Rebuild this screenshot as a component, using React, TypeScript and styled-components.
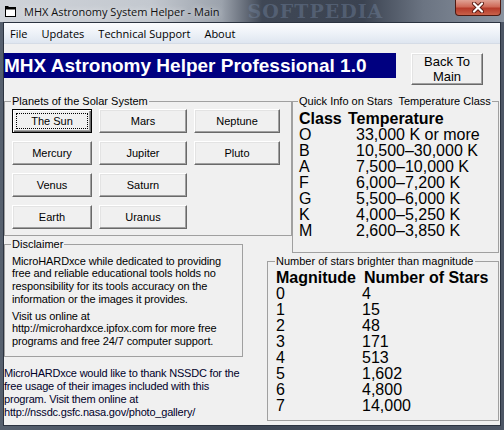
import React from 'react';
import styled, { createGlobalStyle } from 'styled-components';

const GlobalStyle = createGlobalStyle`
  html, body {
    margin: 0;
    padding: 0;
  }
  body {
    width: 504px;
    height: 430px;
    overflow: hidden;
    background: #3f4856;
    font-family: 'Liberation Sans', Arial, sans-serif;
  }
`;

const planets = [
  ['The Sun', 'Mars', 'Neptune'],
  ['Mercury', 'Jupiter', 'Pluto'],
  ['Venus', 'Saturn', ''],
  ['Earth', 'Uranus', ''],
];

const classes = [
  ['O', '33,000 K or more'],
  ['B', '10,500–30,000 K'],
  ['A', '7,500–10,000 K'],
  ['F', '6,000–7,200 K'],
  ['G', '5,500–6,000 K'],
  ['K', '4,000–5,250 K'],
  ['M', '2,600–3,850 K'],
];

const magnitudes = [
  ['0', '4'],
  ['1', '15'],
  ['2', '48'],
  ['3', '171'],
  ['4', '513'],
  ['5', '1,602'],
  ['6', '4,800'],
  ['7', '14,000'],
];

const App = () => {
  return (
    <>
      <GlobalStyle />
      <Window>
        <TitleBar>
          <AppIcon width="11" height="11" viewBox="0 0 11 11">
            <rect x="0.5" y="1.5" width="10" height="9" fill="#fff" stroke="#000" />
            <rect x="0.5" y="1.5" width="10" height="2" fill="#000" />
            <path d="M0 0 L4 0 L0 4 Z" fill="#000" />
          </AppIcon>
          <Title>MHX Astronomy System Helper - Main</Title>
          <Watermark>SOFTPEDIA</Watermark>
          <CloseButton>
            <svg width="14" height="11" viewBox="0 0 14 11">
              <path d="M3 1.5 L11 9.5 M11 1.5 L3 9.5" stroke="#5a1a12" strokeWidth="4" strokeLinecap="round" />
              <path d="M3 1.5 L11 9.5 M11 1.5 L3 9.5" stroke="#fff" strokeWidth="2.2" strokeLinecap="round" />
            </svg>
          </CloseButton>
        </TitleBar>

        <Client>
          <MenuBar>
            <MenuItem>File</MenuItem>
            <MenuItem>Updates</MenuItem>
            <MenuItem>Technical Support</MenuItem>
            <MenuItem>About</MenuItem>
          </MenuBar>

          <Content>
            <HeaderRow>
              <Banner>MHX Astronomy Helper Professional 1.0</Banner>
              <BackButton>
                Back To
                <br />
                Main
              </BackButton>
            </HeaderRow>

            <Panels>
              <GroupBox $area="planets" $pad="1.5px 7px 6px 7px">
                <Legend>Planets of the Solar System</Legend>
                <PlanetGrid>
                  {planets.flat().map((name, i) =>
                    name ? (
                      <PlanetButton key={i} $default={name === 'The Sun'}>
                        {name}
                      </PlanetButton>
                    ) : (
                      <span key={i} />
                    )
                  )}
                </PlanetGrid>
              </GroupBox>

              <GroupBox $area="quick" $pad="3.5px 6px 12.5px 6px">
                <Legend>Quick Info on Stars&nbsp; Temperature Class</Legend>
                <TableRow $key={49} $head>
                  <span>Class</span>
                  <span>Temperature</span>
                </TableRow>
                {classes.map(([c, t]) => (
                  <TableRow key={c} $key={57}>
                    <span>{c}</span>
                    <span>{t}</span>
                  </TableRow>
                ))}
              </GroupBox>

              <GroupBox $area="disc" $pad="4px 7px 8px 7px">
                <Legend>Disclaimer</Legend>
                <Note>
                  MicroHARDxce while dedicated to providing
                  <br />
                  free and reliable educational tools holds no
                  <br />
                  responsibility for its tools accuracy on the
                  <br />
                  information or the images it provides.
                </Note>
                <Note $gap>
                  Visit us online at
                  <br />
                  http://microhardxce.ipfox.com for more free
                  <br />
                  programs and free 24/7 computer support.
                </Note>
              </GroupBox>

              <Thanks>
                MicroHARDxce would like to thank NSSDC for the
                <br />
                free usage of their images included with this
                <br />
                program. Visit them online at
                <br />
                http://nssdc.gsfc.nasa.gov/photo_gallery/
              </Thanks>

              <GroupBox $area="stars" $pad="2.5px 8px 5.5px 8px">
                <Legend>Number of stars brighter than magnitude</Legend>
                <TableRow $key={88} $head>
                  <span>Magnitude</span>
                  <span>Number of Stars</span>
                </TableRow>
                {magnitudes.map(([m, n]) => (
                  <TableRow key={m} $key={86}>
                    <span>{m}</span>
                    <span>{n}</span>
                  </TableRow>
                ))}
              </GroupBox>
            </Panels>
          </Content>
        </Client>
      </Window>
    </>
  );
};

const Window = styled.div`
  width: 504px;
  height: 430px;
  display: flex;
  flex-direction: column;
  background: linear-gradient(90deg, #56606e 0%, #3d4654 50%, #4d5665 100%);
`;

const TitleBar = styled.div`
  flex: none;
  height: 22px;
  display: flex;
  align-items: center;
  padding-left: 5px;
  background: linear-gradient(
    90deg,
    #cfd3d9 0%,
    #c3c8cf 30%,
    #9ba2ac 44%,
    #3f4755 52%,
    #3b4351 72%,
    #6b7482 84%,
    #8a93a0 100%
  );
`;

const AppIcon = styled.svg`
  flex: none;
`;

const Title = styled.div`
  margin-left: 8px;
  font: 11px 'Open Sans', sans-serif;
  color: #111;
  text-shadow: 0 0 6px rgba(255, 255, 255, 0.8);
  white-space: nowrap;
`;

const Watermark = styled.div`
  margin-left: 28px;
  font: bold 19px/22px 'DejaVu Serif', serif;
  letter-spacing: 1px;
  color: rgba(125, 145, 175, 0.35);
  white-space: nowrap;
`;

const CloseButton = styled.div`
  align-self: flex-start;
  margin-left: auto;
  margin-right: 3px;
  width: 44px;
  height: 15px;
  display: flex;
  align-items: center;
  justify-content: center;
  border: 1px solid #4e1a12;
  border-top: none;
  border-radius: 0 0 4px 4px;
  background: linear-gradient(180deg, #e0a295 0%, #cf6a58 45%, #b63b2a 55%, #c9614a 100%);
`;

const Client = styled.div`
  flex: 1;
  display: flex;
  flex-direction: column;
  margin: 0 3px 4px 3px;
  border: 1px solid #2b3340;
  background: #f0f0f0;
  min-height: 0;
`;

const MenuBar = styled.div`
  flex: none;
  height: 20px;
  display: flex;
  align-items: center;
  gap: 14px;
  padding-left: 6px;
  background: linear-gradient(180deg, #fbfcfe 0%, #eef2f8 50%, #dfe6f0 100%);
  border-bottom: 1px solid #d5dce6;
`;

const MenuItem = styled.span`
  font: 11px 'Open Sans', sans-serif;
  color: #000;
`;

const Content = styled.div`
  flex: 1;
  display: flex;
  flex-direction: column;
  padding-top: 9px;
`;

const HeaderRow = styled.div`
  display: flex;
  align-items: flex-start;
`;

const Banner = styled.div`
  width: 392px;
  height: 25px;
  background: #000080;
  color: #fff;
  font: bold 19px/25px 'Liberation Sans', Arial, sans-serif;
  white-space: nowrap;
  overflow: hidden;
`;

const BackButton = styled.button`
  margin-left: 15px;
  width: 72px;
  height: 32px;
  padding: 0;
  background: #f0f0f0;
  border: 1px solid;
  border-color: #fff #696969 #696969 #fff;
  box-shadow: inset -1px -1px #a0a0a0, inset 1px 1px #e3e3e3;
  font: 13px/15px 'Liberation Sans', Arial, sans-serif;
  color: #000;
`;

const Panels = styled.div`
  margin-top: 9.5px;
  display: grid;
  grid-template-columns: 239px 24px 25px 207px;
  grid-template-rows: 143px 17px 105.5px auto;
  grid-template-areas:
    'planets planets planets quick'
    'disc . . quick'
    'disc . stars stars'
    'thanks thanks stars stars';
`;

const GroupBox = styled.fieldset<{ $area: string; $pad: string }>`
  grid-area: ${(props) => props.$area};
  align-self: start;
  min-width: 0;
  margin: 0;
  padding: ${(props) => props.$pad};
  border: 1px solid #a0a0a0;
`;

const Legend = styled.legend`
  margin-left: -1px;
  padding: 0 1px;
  font: 11px/13px 'Liberation Sans', Arial, sans-serif;
  color: #000;
  white-space: nowrap;
`;

const PlanetGrid = styled.div`
  display: grid;
  grid-template-columns: 80px 88px 86px;
  grid-auto-rows: 24px;
  column-gap: 7px;
  row-gap: 8px;
`;

const PlanetButton = styled.button<{ $default?: boolean }>`
  position: relative;
  padding: 0;
  background: #f0f0f0;
  font: 11px 'Liberation Sans', Arial, sans-serif;
  color: #000;
  border: 1px solid;
  border-color: ${(props) => (props.$default ? '#000' : '#fff #696969 #696969 #fff')};
  box-shadow: ${(props) =>
    props.$default
      ? 'inset 1px 1px #fff, inset -1px -1px #696969, inset -2px -2px #a0a0a0'
      : 'inset -1px -1px #a0a0a0, inset 1px 1px #e3e3e3'};

  &::after {
    content: '';
    display: ${(props) => (props.$default ? 'block' : 'none')};
    position: absolute;
    inset: 3px;
    border: 1px dotted #000;
  }
`;

const TableRow = styled.div<{ $key: number; $head?: boolean }>`
  display: grid;
  grid-template-columns: ${(props) => props.$key}px auto;
  font-family: 'Liberation Sans', Arial, sans-serif;
  font-size: 16px;
  font-weight: ${(props) => (props.$head ? 'bold' : 'normal')};
  line-height: 16px;
  color: #000;
  white-space: nowrap;
`;

const Note = styled.p<{ $gap?: boolean }>`
  margin: ${(props) => (props.$gap ? '4px' : '0')} 0 0 0;
  font: 11px/12.8px 'Liberation Sans', Arial, sans-serif;
  letter-spacing: -0.12px;
  color: #000;
  white-space: nowrap;
`;

const Thanks = styled.p`
  grid-area: thanks;
  align-self: start;
  margin: 6.5px 0 0 0;
  font: 11px/13.3px 'Liberation Sans', Arial, sans-serif;
  letter-spacing: -0.2px;
  color: #00002a;
  white-space: nowrap;
`;

export default App;
